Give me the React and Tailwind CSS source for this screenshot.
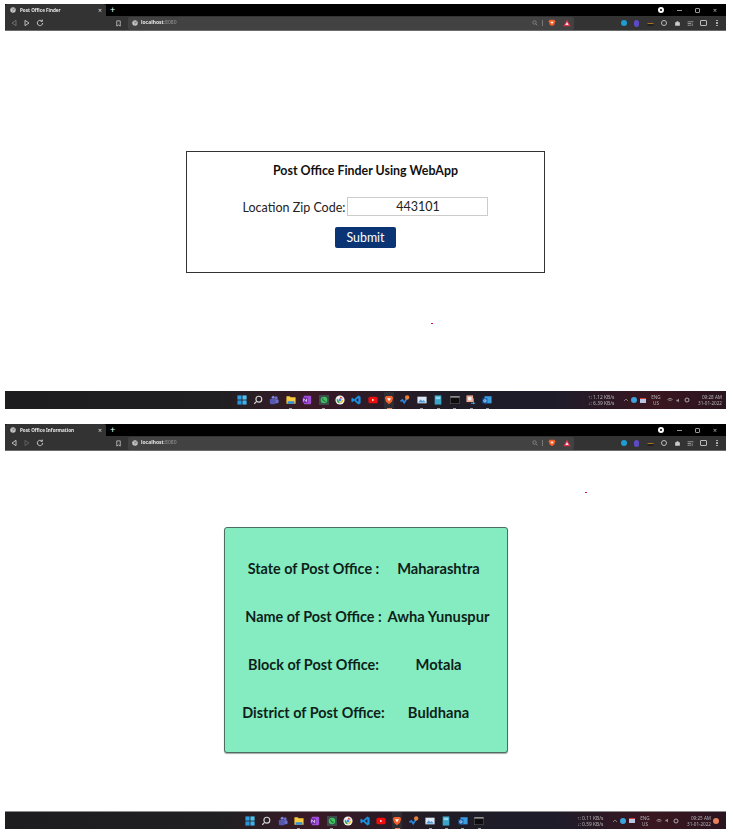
import React from "react";

const lato = { fontFamily: "Lato, 'Open Sans', sans-serif" };

function Svg({ children, size = 10, className = "" }) {
  return (
    <svg width={size} height={size} viewBox="0 0 12 12" className={`shrink-0 ${className}`}>
      {children}
    </svg>
  );
}

const braveIcon = (
  <g>
    <path d="M2.5 1.2h7L11 3.2 9.6 8 6 11 2.4 8 1 3.2z" fill="#f4602a" />
    <path d="M3.6 4h4.8L6 7.6z" fill="#fff" />
  </g>
);

const icons = {
  win: (
    <g>
      <rect x="0.5" y="0.5" width="5" height="5" fill="#2f9fe0" />
      <rect x="6.5" y="0.5" width="5" height="5" fill="#4cc4f2" />
      <rect x="0.5" y="6.5" width="5" height="5" fill="#2a94da" />
      <rect x="6.5" y="6.5" width="5" height="5" fill="#3cb3ea" />
    </g>
  ),
  search: (
    <g fill="none" stroke="#d5d5d5" strokeWidth="1.4">
      <circle cx="7" cy="5" r="3.5" />
      <path d="M4.4 7.6 1.5 10.5" />
    </g>
  ),
  teams: (
    <g fill="#6d70c6">
      <circle cx="8.6" cy="3.2" r="1.8" />
      <rect x="6" y="5" width="5.5" height="5" rx="1.5" />
      <circle cx="5" cy="2.8" r="1.8" fill="#7f83dc" />
      <rect x="1" y="4.5" width="7" height="6.5" rx="1" fill="#5558af" />
    </g>
  ),
  folder: (
    <g>
      <path d="M0.5 1.5h4l1 1.2h6V10.5H0.5z" fill="#f7c93e" />
      <rect x="2" y="7.5" width="8" height="3" fill="#2f8fdc" />
    </g>
  ),
  onenote: (
    <g>
      <rect x="2" y="1" width="9" height="10" rx="1" fill="#a14fd8" />
      <rect x="0.5" y="3" width="6.5" height="6.5" fill="#6f2aa8" />
      <path d="M2 8V4.6L5.4 8V4.6" stroke="#fff" strokeWidth="0.8" fill="none" />
    </g>
  ),
  whatsapp: (
    <g>
      <rect x="0" y="0" width="12" height="12" fill="#3d4a4a" />
      <circle cx="6" cy="6" r="4" fill="#3fc060" />
      <path d="M4.4 4.2c0 2 1.4 3.4 3.4 3.4" stroke="#1d4a2c" strokeWidth="1.2" fill="none" />
    </g>
  ),
  chrome: (
    <g>
      <circle cx="6" cy="6" r="5.5" fill="#f2f2f2" />
      <path d="M6 2a4 4 0 0 1 3.6 2.2H6z" fill="#e8453c" />
      <path d="M9.8 5.5A4 4 0 0 1 6 10l1.5-3z" fill="#f5bc18" />
      <path d="M6 10a4 4 0 0 1-3.5-6L4.5 7z" fill="#36a853" />
      <circle cx="6" cy="6" r="1.7" fill="#4285f4" />
    </g>
  ),
  vscode: <path d="M8.8 0.5 11.5 2v8L8.8 11.5 3.8 7 1.6 8.7.5 8V4l1.1-.7L3.8 5zM8.8 3.6 6 6l2.8 2.4z" fill="#1c8fe0" />,
  youtube: (
    <g>
      <rect x="0.5" y="2" width="11" height="8" rx="2" fill="#f00d0d" />
      <path d="M5 4.4 7.6 6 5 7.6z" fill="#fff" />
    </g>
  ),
  brave: braveIcon,
  steam: (
    <g>
      <path d="M0.5 7.5 3 6l2 3.2L9 3" stroke="#2d86d9" strokeWidth="2" fill="none" />
      <circle cx="8.6" cy="3" r="2.6" fill="#e8803c" />
    </g>
  ),
  photos: (
    <g>
      <rect x="0.5" y="2" width="11" height="8" fill="#dbe7f2" />
      <path d="M1.5 9 4.5 5l2 2.5L8 6l2.5 3z" fill="#4a97d8" />
    </g>
  ),
  book: (
    <g>
      <rect x="2" y="0.5" width="8" height="11" fill="#3ba5c7" />
      <rect x="3.2" y="2" width="5.6" height="3" fill="#8fd6ea" />
    </g>
  ),
  terminal: (
    <g>
      <rect x="0.5" y="1.5" width="11" height="9" fill="#0d0d0d" stroke="#666" strokeWidth="0.6" />
      <rect x="0.5" y="1.5" width="11" height="1.6" fill="#aaa" />
    </g>
  ),
  snip: (
    <g>
      <rect x="0.5" y="0.5" width="8" height="8" fill="#e8a68e" />
      <rect x="2.5" y="2.5" width="4" height="4" fill="#f2f2f2" />
      <path d="M9 4v7M6 10h5" stroke="#4b9fd8" strokeWidth="1.2" />
    </g>
  ),
  outlook: (
    <g>
      <rect x="3" y="1.5" width="8.5" height="8.5" fill="#3d9be0" />
      <rect x="0.5" y="4" width="6" height="6" fill="#0f5fb0" />
      <circle cx="3.5" cy="7" r="1.4" fill="none" stroke="#fff" strokeWidth="0.8" />
    </g>
  ),
};

const Back = ({ c }) => (
  <Svg size={8}><path d="M9 2 3 6l6 4z" fill="none" stroke={c} strokeWidth="1.3" /></Svg>
);
const Forward = ({ c }) => (
  <Svg size={8}><path d="M3 2l6 4-6 4z" fill="none" stroke={c} strokeWidth="1.3" /></Svg>
);
const Globe = ({ size = 6 }) => (
  <Svg size={size}>
    <circle cx="6" cy="6" r="5.5" fill="#c8c8c8" />
    <path d="M3 3 7 5 5 9M9 2 8 5l2 2" stroke="#4a4a4a" strokeWidth="1" fill="none" />
  </Svg>
);

function TitleBar({ title }) {
  return (
    <div className="h-[12px] bg-black flex items-stretch text-[#e8e8e8]">
      <div className="w-[101px] bg-[#333333] rounded-t-[2px] flex items-center pl-[5px] pr-[4px] gap-[4px]">
        <Globe size={6} />
        <span className="text-[4.6px] font-bold flex-1 whitespace-nowrap blur-[0.3px]">{title}</span>
        <span className="text-[7px] leading-none text-[#ddd] blur-[0.2px]">×</span>
      </div>
      <span className="ml-[4px] text-[9px] leading-[12px] text-white">+</span>
      <div className="flex-1" />
      <div className="flex items-center w-[68px] gap-[13px] pr-[2px] blur-[0.3px]">
        <div className="w-[6px] h-[6px] rounded-full bg-white flex items-center justify-center shrink-0">
          <div className="w-[2px] h-[2px] rounded-full bg-black" />
        </div>
        <div className="w-[5px] h-px bg-[#999] shrink-0" />
        <div className="w-[5px] h-[5px] border border-[#999] rounded-[1px] shrink-0" />
        <span className="text-[7px] leading-none text-[#bbb]">×</span>
      </div>
    </div>
  );
}

function ToolSlot({ children }) {
  return <div className="w-[13.4px] flex items-center justify-center">{children}</div>;
}

function Toolbar({ backColor, fwdColor }) {
  return (
    <div className="h-[15px] bg-[#333333] border-b border-[#6b6b6b] flex items-center">
      <div className="w-[123px] flex items-center pl-[5px] pr-[6px] gap-[5px] blur-[0.3px]">
        <Back c={backColor} />
        <Forward c={fwdColor} />
        <Svg size={8}>
          <path d="M10 6a4 4 0 1 1-1.2-2.9M9.5 1v2.6H7" fill="none" stroke="#d0d0d0" strokeWidth="1.4" />
        </Svg>
        <div className="flex-1" />
        <Svg size={7}><path d="M3 1.5h6v9L6 8.5l-3 2z" fill="none" stroke="#d0d0d0" strokeWidth="1.3" /></Svg>
      </div>
      <div className="w-[446px] h-[13px] bg-[#424242] rounded-[2px] flex items-center pl-[4px] pr-[3px] gap-[3px]">
        <Globe size={6} />
        <span className="text-[5px] font-bold text-[#e5e5e5] blur-[0.3px]">
          localhost<span className="font-normal text-[#9a9a9a]">:8080</span>
        </span>
        <div className="flex-1" />
        <Svg size={6}>
          <g fill="none" stroke="#999" strokeWidth="1.4"><circle cx="5" cy="5" r="3.4" /><path d="M8 8l3 3" /></g>
        </Svg>
        <div className="w-px h-[6px] bg-[#777] mx-[1px]" />
        <Svg size={8} className="ml-[1px]">{braveIcon}</Svg>
        <Svg size={8} className="ml-[4px]">
          <path d="M6 1 11.5 11H.5z" fill="#e0304a" />
          <path d="M6 4.5 8.5 9h-5z" fill="#f0e6f0" />
        </Svg>
      </div>
      <div className="flex-1 flex items-center justify-end pr-[2px] blur-[0.3px]">
        <ToolSlot><div className="w-[6px] h-[6px] rounded-full bg-[#1e9ed0]" /></ToolSlot>
        <ToolSlot><div className="w-[5px] h-[7px] rounded-full bg-[#5d4bc4]" /></ToolSlot>
        <ToolSlot><div className="w-[7px] h-[3px] mt-[2px] rounded-sm bg-[#222] border-t border-[#b0761e]" /></ToolSlot>
        <ToolSlot><div className="w-[6px] h-[6px] rounded-full border border-[#bbb]" /></ToolSlot>
        <ToolSlot><Svg size={7}><path d="M2 4h2.5V2h3v2H10v6H2z" fill="#ccc" /></Svg></ToolSlot>
        <ToolSlot><Svg size={7}><path d="M1 3h10M1 6h6M1 9h6M9 6v4" stroke="#aaa" strokeWidth="1.4" fill="none" /></Svg></ToolSlot>
        <ToolSlot><div className="w-[7px] h-[6px] rounded-[1px] border border-[#bbb]" /></ToolSlot>
        <ToolSlot>
          <div className="flex flex-col items-center gap-px">
            <div className="w-[2px] h-[1.5px] bg-[#aaa]" />
            <div className="w-[2px] h-[1.5px] bg-[#aaa]" />
            <div className="w-[2px] h-[1.5px] bg-[#aaa]" />
          </div>
        </ToolSlot>
      </div>
    </div>
  );
}

function Taskbar({ apps, up, down, time, notify, running, topLine }) {
  return (
    <div
      className={`relative h-[18px] flex items-center bg-[linear-gradient(90deg,#1d1d1f_0%,#202022_30%,#3a1a26_42%,#1f1c26_60%,#1e1c2a_76%,#3a1620_90%,#2a1420_100%)] ${topLine ? "border-t border-[#8a8a8a]" : ""}`}
    >
      <div className="flex-1 flex justify-center items-center gap-[6.4px] pr-[2px] blur-[0.3px]">
        {apps.map((a, i) => (
          <div
            key={i}
            className={`relative w-[10px] h-[17px] flex items-center justify-center ${a === "brave" ? "bg-[#2d2d33]" : ""}`}
          >
            <Svg size={10}>{icons[a]}</Svg>
            {running.includes(a) && (
              <div className={`absolute bottom-0 left-[3.5px] h-px ${a === "brave" ? "w-[5px] -ml-[1px] bg-[#e8805c]" : "w-[3px] bg-[#999]"}`} />
            )}
          </div>
        ))}
      </div>
      <div className={`absolute top-0 bottom-0 flex items-center text-[#b5b5b5] blur-[0.3px] ${notify ? "left-[572px]" : "left-[583px]"}`}>
        <div className="text-[4.9px] leading-[6px] w-[35px] whitespace-nowrap">
          <div>↑: {up} KB/s</div>
          <div>↓: {down} KB/s</div>
        </div>
        <Svg size={6}><path d="M2 8l4-4 4 4" stroke="#bbb" strokeWidth="1.2" fill="none" /></Svg>
        <div className="w-[6px] h-[6px] ml-[2px] rounded-full bg-[#3aa3dc]" />
        <div className="w-[6px] h-[5px] ml-[3px] bg-[#b8c4e0] border-t border-[#d93a3a]" />
        <div className="text-[4.6px] leading-[6px] w-[20px] text-center">
          <div>ENG</div>
          <div>US</div>
        </div>
        <Svg size={6} className="ml-[1px]"><path d="M1 5a7 7 0 0 1 10 0M3 7.5a4 4 0 0 1 6 0" stroke="#ccc" strokeWidth="1.3" fill="none" /></Svg>
        <Svg size={5} className="ml-[3px]"><path d="M1 4h3l3-3v10L4 8H1z" fill="#999" /></Svg>
        <Svg size={6} className="ml-[3px]"><circle cx="6" cy="6" r="4" fill="none" stroke="#ccc" strokeWidth="1.6" /></Svg>
        <div className="text-[4.6px] leading-[6px] w-[29px] ml-[3px] text-right whitespace-nowrap">
          <div>{time}</div>
          <div>31-01-2022</div>
        </div>
        {notify && <div className="w-[6px] h-[6px] ml-[2px] rounded-full bg-[#e8805c]" />}
      </div>
    </div>
  );
}

function Window({ title, backColor, fwdColor, children, contentClass, taskbar, className = "" }) {
  return (
    <div className={`flex flex-col ${className}`}>
      <TitleBar title={title} />
      <Toolbar backColor={backColor} fwdColor={fwdColor} />
      <div className={`relative h-[360px] bg-white flex justify-center ${contentClass}`}>{children}</div>
      <Taskbar {...taskbar} />
    </div>
  );
}

function Finder() {
  return (
    <form
      style={lato}
      className="w-[359px] h-[122px] border border-[#333333] flex flex-col items-center text-[#222222]"
      onSubmit={(e) => e.preventDefault()}
    >
      <h1 className="mt-[10px] text-[12.4px] leading-[17px] font-bold text-[#111111]">Post Office Finder Using WebApp</h1>
      <div className="mt-[18px] h-[19px] flex items-start gap-[2px]">
        <label className="text-[12.5px] leading-[21px] whitespace-nowrap">Location Zip Code:</label>
        <input
          readOnly
          value="443101"
          style={lato}
          className="w-[141px] h-[19px] pt-[1px] border border-[#cccccc] text-center text-[12.5px] text-[#222222] outline-none"
        />
      </div>
      <button
        type="submit"
        style={lato}
        className="mt-[11px] w-[61px] h-[21px] bg-[#0a3474] rounded-[2px] text-white text-[12.4px] leading-[21px]"
      >
        Submit
      </button>
    </form>
  );
}

const rows = [
  ["State of Post Office :", "Maharashtra"],
  ["Name of Post Office :", "Awha Yunuspur"],
  ["Block of Post Office:", "Motala"],
  ["District of Post Office:", "Buldhana"],
];

function Info() {
  return (
    <div
      style={lato}
      className="w-[284px] h-[226px] bg-[#85ecc1] border border-[#4a6e60] rounded-[3px] shadow-[0_1px_1px_rgba(0,0,0,0.35)] flex justify-center pt-[28px]"
    >
      <div className="grid grid-cols-[146px_104px] auto-rows-[48px] font-bold text-[#0f1f1a]">
        {rows.map(([k, v]) => (
          <React.Fragment key={k}>
            <div className="text-center text-[14.4px] leading-[26px] whitespace-nowrap">{k}</div>
            <div className="text-center text-[14.7px] leading-[24px] whitespace-nowrap">{v}</div>
          </React.Fragment>
        ))}
      </div>
    </div>
  );
}

export default function App() {
  return (
    <div className="w-[733px] h-[838px] bg-white pt-[4px] pl-[5px] pr-[7px] overflow-hidden">
      <Window
        title="Post Office Finder"
        backColor="#777"
        fwdColor="#d0d0d0"
        contentClass="items-center pt-[1px]"
        taskbar={{
          apps: ["win", "search", "teams", "folder", "onenote", "whatsapp", "chrome", "vscode", "youtube", "brave", "steam", "photos", "book", "terminal", "snip", "outlook"],
          running: ["folder", "whatsapp", "brave", "photos", "book", "terminal", "snip", "outlook"],
          up: "1.12",
          down: "6.39",
          time: "09:28 AM",
        }}
      >
        <Finder />
        <div className="absolute left-[426px] top-[292px] w-[2px] h-px bg-[#d01040]" />
      </Window>
      <Window
        className="mt-[15px]"
        title="Post Office Information"
        backColor="#d0d0d0"
        fwdColor="#666"
        contentClass="items-start pt-[76px]"
        taskbar={{
          apps: ["win", "search", "teams", "folder", "onenote", "whatsapp", "chrome", "vscode", "youtube", "brave", "steam", "photos", "book", "outlook", "terminal"],
          running: ["folder", "whatsapp", "brave", "photos", "book", "terminal", "outlook"],
          up: "0.11",
          down: "0.59",
          time: "09:25 AM",
          notify: true,
          topLine: true,
        }}
      >
        <Info />
        <div className="absolute left-[580px] top-[41px] w-[2px] h-px bg-[#d01040]" />
      </Window>
    </div>
  );
}
